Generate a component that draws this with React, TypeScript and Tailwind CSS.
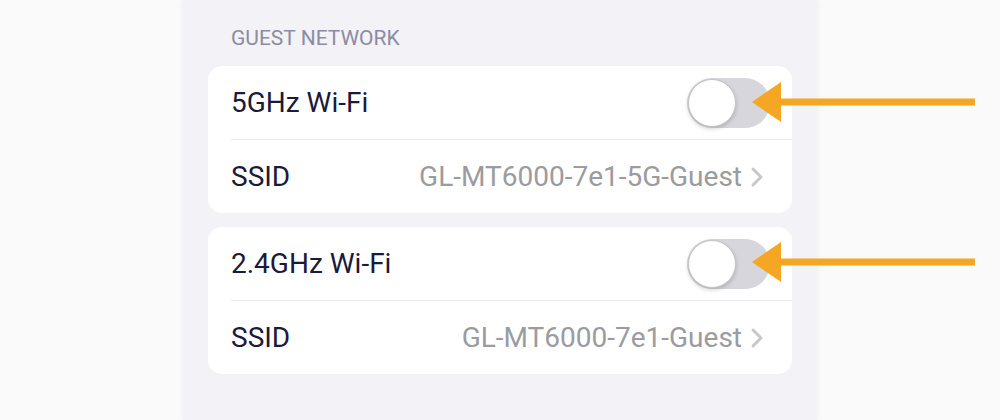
import React from "react";

function Toggle() {
  return (
    <div className="relative h-[50px] w-[83px] rounded-full bg-[#d6d6dc]">
      <div className="absolute left-[1px] top-[1px] h-[48px] w-[48px] rounded-full border border-[#c4c4c8] bg-white shadow-[0_2px_4px_rgba(0,0,0,0.18)]" />
    </div>
  );
}

function Chevron() {
  return (
    <svg width="14" height="22" viewBox="0 0 14 22" className="ml-[8px]">
      <path d="M3 3 L11 11 L3 19" fill="none" stroke="#c7c7cc" strokeWidth="3" strokeLinecap="round" strokeLinejoin="round" />
    </svg>
  );
}

function Arrow({ top }: { top: number }) {
  return (
    <svg
      width="230"
      height="44"
      viewBox="0 0 230 44"
      className="absolute left-[750px]"
      style={{ top }}
    >
      <line x1="26" y1="22" x2="225" y2="22" stroke="#f5a623" strokeWidth="7" />
      <polygon points="2,22 31,2 31,42" fill="#f5a623" />
    </svg>
  );
}

function Card({ band, ssid }: { band: string; ssid: string }) {
  return (
    <div className="rounded-[14px] bg-white">
      <div className="flex h-[73px] items-center justify-between pl-[23px] pr-[22px]">
        <span className="text-[28px] text-[#1b1a3a]">{band}</span>
        <Toggle />
      </div>
      <div className="ml-[23px] h-px bg-[#ececf0]" />
      <div className="flex h-[73px] items-center justify-between pl-[23px] pr-[28px]">
        <span className="text-[28px] text-[#1b1a3a]">SSID</span>
        <div className="flex items-center">
          <span className="text-[28px] text-[#9b9ba0]">{ssid}</span>
          <Chevron />
        </div>
      </div>
    </div>
  );
}

export default function App() {
  return (
    <div
      className="relative h-[420px] w-[1000px] overflow-hidden bg-[#fafafa]"
      style={{ fontFamily: "Roboto, 'Liberation Sans', sans-serif" }}
    >
      <div className="mx-auto h-full w-[634px] bg-[#f2f2f7] px-[25px] pt-[26px] shadow-[0_0_6px_rgba(0,0,0,0.06)]">
        <div className="mb-[16px] pl-[23px] text-[21px] leading-[24px] text-[#8c8ca2]">
          GUEST NETWORK
        </div>
        <div className="flex flex-col gap-[14px]">
          <Card band="5GHz Wi-Fi" ssid="GL-MT6000-7e1-5G-Guest" />
          <Card band="2.4GHz Wi-Fi" ssid="GL-MT6000-7e1-Guest" />
        </div>
      </div>
      <Arrow top={80} />
      <Arrow top={240} />
    </div>
  );
}
